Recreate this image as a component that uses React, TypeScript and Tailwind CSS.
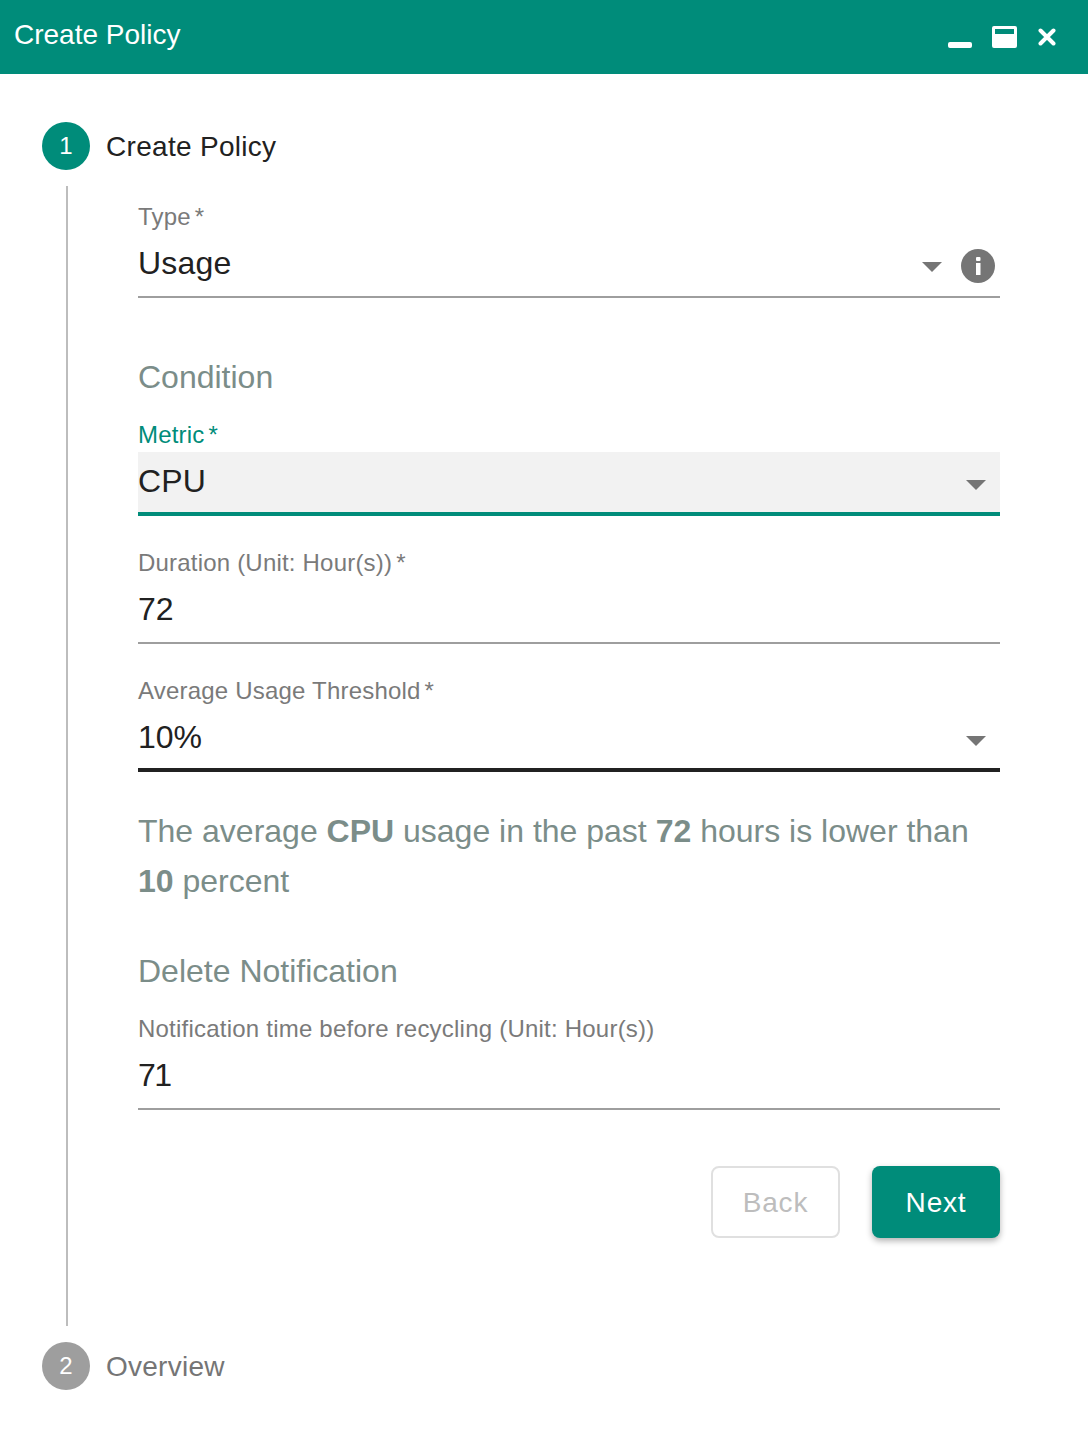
const font = { fontFamily: '"Liberation Sans", Arial, sans-serif' };

function Caret({ className }: { className: string }) {
  return (
    <svg viewBox="0 0 20 10" className={className} fill="#757575">
      <path d="M0 0h20L10 10z" />
    </svg>
  );
}

function Label({ text, focused }: { text: string; focused?: boolean }) {
  return (
    <div className={`h-6 text-[24px] leading-6 tracking-[0.2px] ${focused ? 'text-[#008c7a]' : 'text-[#7a7a7a]'}`}>
      {text}
      <span className="ml-1">*</span>
    </div>
  );
}

function Heading({ children, className }: { children: React.ReactNode; className: string }) {
  return <div className={`text-[32px] leading-10 text-[#7b8d89] ${className}`}>{children}</div>;
}

export default function App() {
  return (
    <div className="h-[1442px] w-[1088px] overflow-hidden bg-white" style={font}>
      <header className="flex h-[74px] items-center justify-between bg-[#008c7a] pl-[14px] pr-[32px] text-white">
        <h1 className="mb-[5px] text-[28px] leading-8">Create Policy</h1>
        <div className="mb-[2px] flex items-center">
          <svg width="24" height="6" viewBox="0 0 24 6" className="mt-[17px]">
            <rect width="24" height="6" rx="2" fill="#fff" />
          </svg>
          <svg width="25" height="22" viewBox="0 0 25 22" className="ml-[20px] mt-[2px]">
            <path
              fillRule="evenodd"
              d="M2 0h21a2 2 0 0 1 2 2v18a2 2 0 0 1-2 2H2a2 2 0 0 1-2-2V2a2 2 0 0 1 2-2zM3 3v5h19V3z"
              fill="#fff"
            />
          </svg>
          <svg width="18" height="18" viewBox="0 0 18 18" className="ml-[21px] mt-[2px]">
            <path d="M2.5 2.5l13 13M15.5 2.5l-13 13" stroke="#fff" strokeWidth="4" strokeLinecap="round" />
          </svg>
        </div>
      </header>

      <main className="pl-[42px] pr-[88px] pt-[48px]">
        <div className="flex h-12 items-center">
          <div className="flex h-12 w-12 items-center justify-center rounded-full bg-[#008c7a] text-[24px] text-white">1</div>
          <div className="ml-4 pt-[2px] text-[28px] tracking-[0.3px] text-[#212121]">Create Policy</div>
        </div>

        <div className="ml-6 mt-4 h-[1140px] border-l-2 border-[#bdbdbd] pl-[70px] pt-[19px]">
          <Label text="Type" />
          <div className="mt-[11px] flex h-[58px] items-start justify-between border-b-2 border-[#9e9e9e] pt-[5px]">
            <span className="text-[32px] leading-[36px] tracking-[0.2px] text-[#212121]">Usage</span>
            <div className="mr-[5px] mt-[4px] flex items-center">
              <Caret className="mt-[2px] h-[10px] w-5" />
              <svg width="34" height="34" viewBox="0 0 34 34" className="ml-[19px]">
                <circle cx="17" cy="17" r="17" fill="#757575" />
                <rect x="15" y="14" width="4.5" height="12" fill="#fff" />
                <rect x="15" y="8" width="4.5" height="4" rx="1" fill="#fff" />
              </svg>
            </div>
          </div>

          <Heading className="mt-[59px]">Condition</Heading>

          <div className="mt-[26px]">
            <Label text="Metric" focused />
          </div>
          <div className="mt-[5px] flex h-16 items-start justify-between border-b-4 border-[#008c7a] bg-[#f2f2f2] pr-[14px]">
            <span className="mt-[10px] text-[32px] leading-[38px] tracking-[0.2px] text-[#212121]">CPU</span>
            <Caret className="mt-[28px] h-[10px] w-5" />
          </div>

          <div className="mt-[35px]">
            <Label text="Duration (Unit: Hour(s))" />
          </div>
          <div className="mt-[11px] h-[58px] border-b-2 border-[#9e9e9e] pt-[5px] text-[32px] leading-[36px] text-[#212121]">72</div>

          <div className="mt-[35px]">
            <Label text="Average Usage Threshold" />
          </div>
          <div className="mt-[11px] flex h-[58px] items-start justify-between border-b-4 border-[#212121] pr-[14px] pt-[5px]">
            <span className="text-[32px] leading-[36px] text-[#212121]">10%</span>
            <Caret className="mt-[17px] h-[10px] w-5" />
          </div>

          <Heading className="mt-[34px] leading-[50px]!">
            The average <b>CPU</b> usage in the past <b>72</b> hours is lower than <b>10</b> percent
          </Heading>

          <Heading className="mt-[45px]">Delete Notification</Heading>

          <div className="mt-[26px] h-6 text-[24px] leading-6 tracking-[0.22px] text-[#7a7a7a]">Notification time before recycling (Unit: Hour(s))</div>
          <div className="mt-[11px] h-[58px] border-b-2 border-[#9e9e9e] pt-[5px] text-[32px] leading-[36px] tracking-[-1.5px] text-[#212121]">71</div>

          <div className="mt-14 flex justify-end gap-8">
            <button type="button" className="h-[72px] w-[129px] rounded-lg border-2 border-[#e0e0e0] pt-[2px] text-[28px] tracking-[0.8px] text-[#bdbdbd]">Back</button>
            <button type="button" className="h-[72px] w-[128px] rounded-lg bg-[#008c7a] pt-[2px] text-[28px] tracking-[0.8px] text-white shadow-[0_3px_6px_rgba(0,0,0,0.3)]">Next</button>
          </div>
        </div>

        <div className="mt-4 flex h-12 items-center">
          <div className="flex h-12 w-12 items-center justify-center rounded-full bg-[#9e9e9e] text-[24px] text-white">2</div>
          <div className="ml-4 pt-[2px] text-[28px] tracking-[0.25px] text-[#757575]">Overview</div>
        </div>
      </main>
    </div>
  );
}
